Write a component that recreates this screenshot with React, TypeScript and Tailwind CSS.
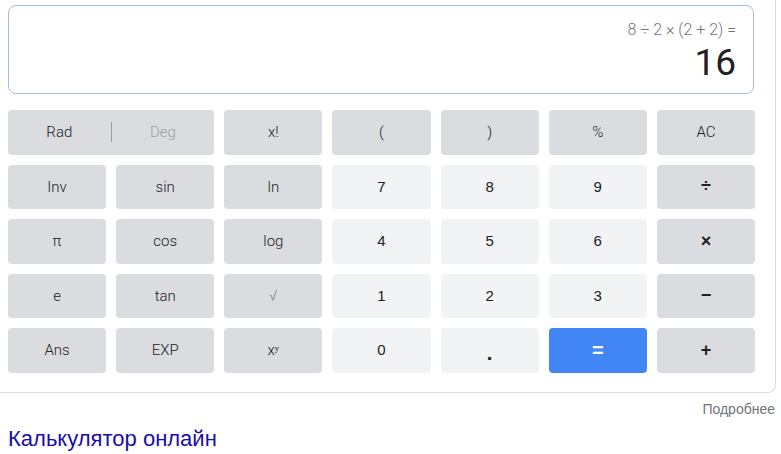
import React from "react";

type K = { label: React.ReactNode; kind: "fn" | "num" | "op" | "eq" | "dot" | "sqrt" };

const rows: K[][] = [
  [
    { label: "x!", kind: "fn" },
    { label: "(", kind: "fn" },
    { label: ")", kind: "fn" },
    { label: "%", kind: "fn" },
    { label: "AC", kind: "fn" },
  ],
  [
    { label: "Inv", kind: "fn" },
    { label: "sin", kind: "fn" },
    { label: "ln", kind: "fn" },
    { label: "7", kind: "num" },
    { label: "8", kind: "num" },
    { label: "9", kind: "num" },
    { label: "÷", kind: "op" },
  ],
  [
    { label: "π", kind: "fn" },
    { label: "cos", kind: "fn" },
    { label: "log", kind: "fn" },
    { label: "4", kind: "num" },
    { label: "5", kind: "num" },
    { label: "6", kind: "num" },
    { label: "×", kind: "op" },
  ],
  [
    { label: "e", kind: "fn" },
    { label: "tan", kind: "fn" },
    { label: "√", kind: "sqrt" },
    { label: "1", kind: "num" },
    { label: "2", kind: "num" },
    { label: "3", kind: "num" },
    { label: "−", kind: "op" },
  ],
  [
    { label: "Ans", kind: "fn" },
    { label: "EXP", kind: "fn" },
    { label: "xʸ", kind: "fn" },
    { label: "0", kind: "num" },
    { label: ".", kind: "dot" },
    { label: "=", kind: "eq" },
    { label: "+", kind: "op" },
  ],
];

const base = "h-[44.5px] rounded-[4px] flex items-center justify-center";

function Key({ k }: { k: K }) {
  if (k.kind === "eq")
    return <div className={base + " bg-[#4285f4] text-white text-[20px] font-bold"}>=</div>;
  if (k.kind === "num")
    return <div className={base + " bg-[#f1f3f4] text-[#202124] text-[15px]"}>{k.label}</div>;
  if (k.kind === "dot")
    return <div className={base + " bg-[#f1f3f4] text-[#202124] text-[20px] font-bold pt-[6px]"}>.</div>;
  if (k.kind === "op")
    return <div className={base + " bg-[#dadce0] text-[#202124] text-[18px] font-bold"}>{k.label}</div>;
  if (k.kind === "sqrt")
    return (
      <div className={base + " bg-[#dadce0] text-[#80868b] text-[15px] font-['Roboto'] font-light"}>√</div>
    );
  return (
    <div className={base + " bg-[#dadce0] text-[#202124] text-[15px] font-['Roboto'] font-light"}>{k.label}</div>
  );
}

export default function App() {
  return (
    <div
      className="w-[781px] h-[454px] bg-white overflow-hidden"
      style={{ fontFamily: "Arial, 'Liberation Sans', sans-serif" }}
    >
      <div className="w-[776px] border-r border-b border-[#dadce0] rounded-br-[8px] pl-[8px] pt-[5px] pb-[19px]">
        <div className="w-[746px] h-[89px] rounded-[8px] border border-[#a4bde6] flex flex-col items-end pr-[17px] pt-[14px]">
          <div className="text-[16px] text-[#70757a] leading-[20px] font-['Roboto'] font-light">8 ÷ 2 × (2 + 2) =</div>
          <div className="text-[37px] text-[#202124] leading-[40px] mt-[3px] font-['Roboto']">16</div>
        </div>
        <div className="mt-[16px] w-[747px] grid grid-cols-7 gap-x-[10px] gap-y-[10px]">
          <div className="col-span-2 h-[44.5px] rounded-[4px] bg-[#dadce0] flex items-center text-[15px] font-['Roboto'] font-light">
            <div className="flex-1 text-center text-[#202124]">Rad</div>
            <div className="w-px h-[20px] bg-[#9aa0a6]" />
            <div className="flex-1 text-center text-[#9aa0a6]">Deg</div>
          </div>
          {rows.map((r, i) => r.map((k, j) => <Key key={i + "-" + j} k={k} />))}
        </div>
      </div>
      <div className="w-[775px] text-right text-[14px] text-[#70757a] mt-[7px] leading-[18px]">Подробнее</div>
      <div className="pl-[8px] mt-[8px] text-[22px] text-[#1a0dab] leading-[26px]">Калькулятор онлайн</div>
    </div>
  );
}
